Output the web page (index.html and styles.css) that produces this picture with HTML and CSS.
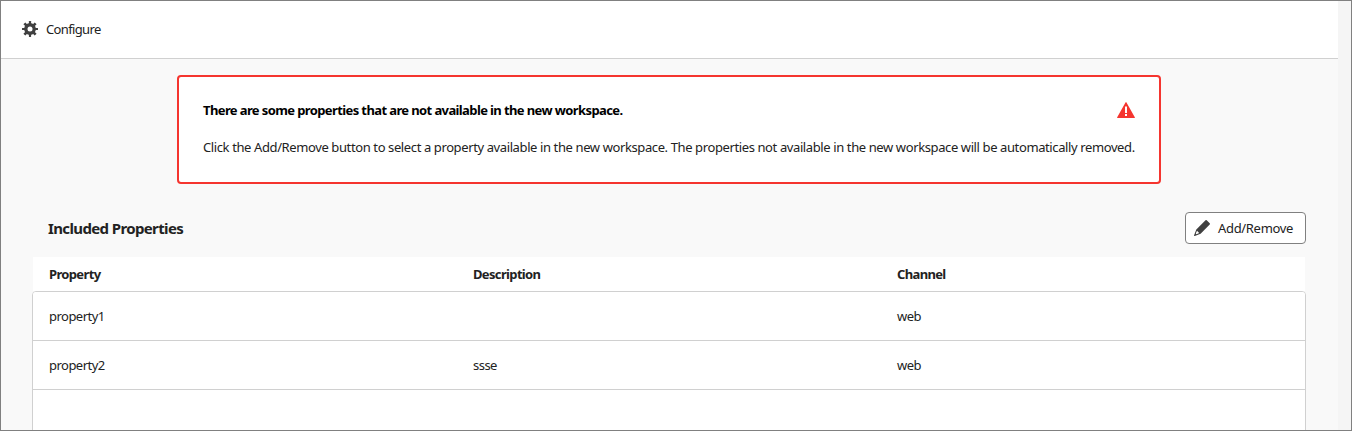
FILE: index.html
```html
<!DOCTYPE html>
<html lang="en">
<head>
<meta charset="utf-8">
<title>Configure</title>
<link rel="stylesheet" href="styles.css">
</head>
<body>
<div class="window">
  <main class="page">
    <header class="topbar">
      <svg class="gear" viewBox="0 0 16 16" width="16" height="16">
        <g fill="#404040">
          <rect x="6.9" y="0" width="2.2" height="16" rx=".4"/>
          <rect x="6.6" y="0" width="2.8" height="16" rx=".4" transform="rotate(45 8 8)"/>
          <rect x="6.9" y="0" width="2.2" height="16" rx=".4" transform="rotate(90 8 8)"/>
          <rect x="6.6" y="0" width="2.8" height="16" rx=".4" transform="rotate(135 8 8)"/>
          <circle cx="8" cy="8" r="5.9"/>
        </g>
        <circle cx="8" cy="8" r="2.5" fill="#fff"/>
      </svg>
      <span class="topbar-title">Configure</span>
    </header>
    <section class="alert">
      <div class="alert-head">
        <strong class="alert-title">There are some properties that are not available in the new workspace.</strong>
        <svg width="18" height="16" viewBox="0 0 18 16">
          <path fill="#f5352f" d="M8.5.4a.6.6 0 0 1 1 0l8.3 14.8a.5.5 0 0 1-.5.8H.7a.5.5 0 0 1-.5-.8z"/>
          <path fill="#fff" d="M8 4.5h2V11H8zM8 12h2v2H8z"/>
        </svg>
      </div>
      <p class="alert-text">Click the Add/Remove button to select a property available in the new workspace. The properties not available in the new workspace will be automatically removed.</p>
    </section>
    <section class="properties">
      <div class="section-head">
        <h2 class="section-title">Included Properties</h2>
        <button class="button">
          <svg width="16" height="16" viewBox="0 0 16 16">
            <path fill="#404040" d="M11.5.3a.9.9 0 0 1 1.2 0l3 3a.9.9 0 0 1 0 1.2L6.6 13.7.8 15.9a.5.5 0 0 1-.7-.7l2.2-5.8z"/>
            <path fill="#fff" d="M3 10.8l2.2 2.2-2.8 1.2-.6-.6z"/>
          </svg>
          <span class="button-label">Add/Remove</span>
        </button>
      </div>
      <div class="row head"><span>Property</span><span>Description</span><span>Channel</span></div>
      <div class="table-body">
        <div class="row"><span>property1</span><span></span><span>web</span></div>
        <div class="row"><span>property2</span><span>ssse</span><span>web</span></div>
      </div>
    </section>
  </main>
  <div class="gutter"></div>
</div>
</body>
</html>
```
FILE: styles.css
```css
* { box-sizing: border-box; }
body {
  margin: 0;
  background: #000;
  font: 13px/20px "Noto Sans", "Open Sans", sans-serif;
  color: #222;
}
.window {
  display: flex;
  height: 431px;
  border: 1px solid #808080;
  overflow: hidden;
  background: #f5f5f5;
}
.page { width: 1337px; background: #f9f9f9; }
.gutter { flex: 1; background: #f5f5f5; }
.topbar {
  display: flex;
  align-items: center;
  gap: 8px;
  height: 58px;
  padding: 0 0 1px 21px;
  background: #fff;
  border-bottom: 1px solid #d0d0d0;
}
.topbar-title { letter-spacing: -0.64px; }
.alert {
  width: 984px;
  height: 109px;
  margin: 16px 0 0 176px;
  padding: 23px 24px 0;
  background: #fff;
  border: 2px solid #f5352f;
  border-radius: 4px;
}
.alert-head { display: flex; justify-content: space-between; height: 20px; align-items: center; }
.alert-title { color: #000; letter-spacing: -0.61px; }
.alert-text { margin: 17px 0 0; white-space: nowrap; letter-spacing: -0.39px; }
.properties { width: 1274px; margin: 28px 0 0 31px; }
.section-head { display: flex; justify-content: space-between; align-items: center; height: 32px; padding-left: 16px; }
.section-title { margin: 0; font-size: 15px; letter-spacing: -0.63px; }
.button {
  display: flex;
  align-items: center;
  gap: 8px;
  width: 121px;
  height: 32px;
  padding: 0 0 0 8px;
  font: inherit;
  color: inherit;
  background: #fff;
  border: 1px solid #808080;
  border-radius: 4px;
}
.button-label { white-space: nowrap; letter-spacing: -0.32px; }
.row {
  display: grid;
  grid-template-columns: 424px 424px 1fr;
  align-items: center;
  height: 49px;
  padding-left: 16px;
  background: #fff;
  border-bottom: 1px solid #d0d0d0;
  letter-spacing: -0.53px;
}
.head {
  height: 34px;
  margin: 13px 1px 0;
  border: 0;
  font-weight: 700;
  letter-spacing: -0.65px;
}
.table-body {
  height: 200px;
  background: #fff;
  border: 1px solid #d0d0d0;
  border-radius: 4px;
  overflow: hidden;
}
```
